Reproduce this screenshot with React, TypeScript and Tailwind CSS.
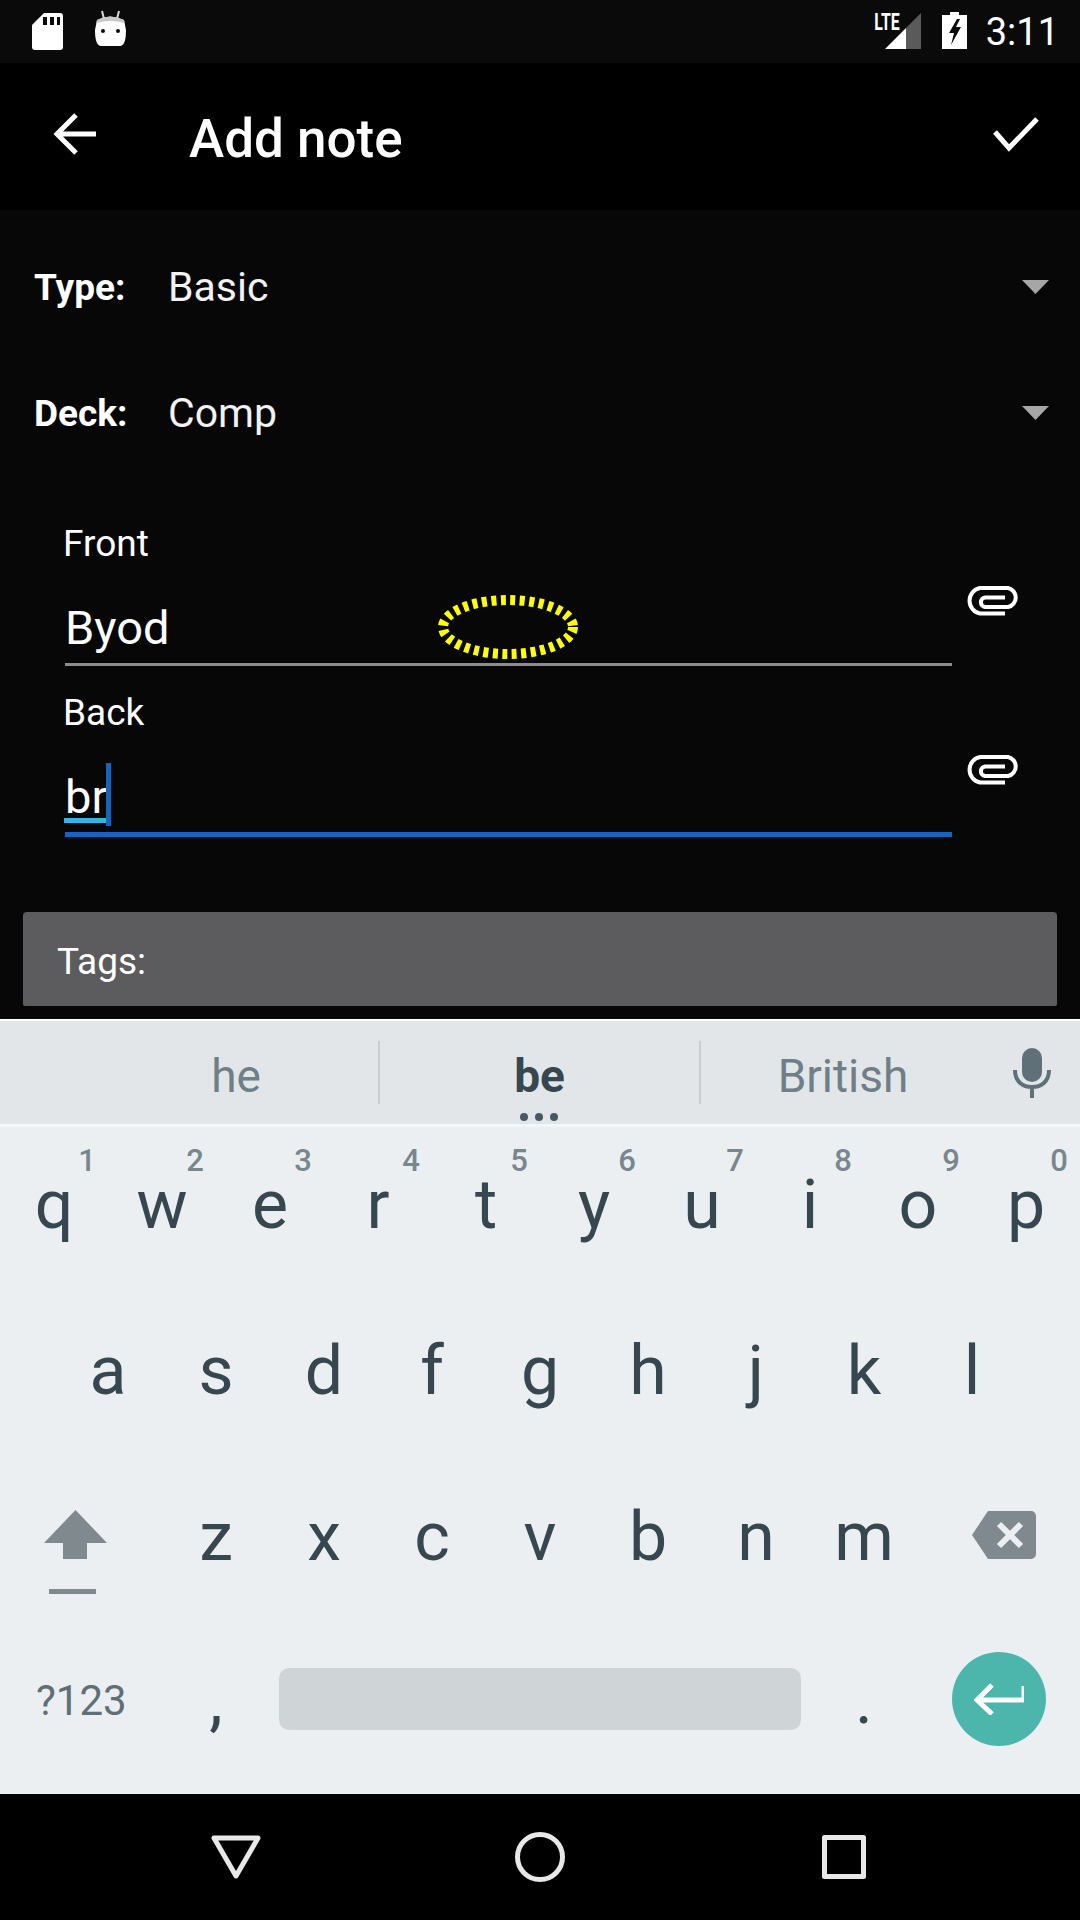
const font = { fontFamily: "Roboto, sans-serif" };

function Clip() {
  return (
    <svg width="54" height="30" viewBox="0 0 54 30" fill="none" stroke="#ffffff" strokeWidth="4">
      <path d="M40 27.5H15A13 13 0 0 1 15 2H43A9.7 9.7 0 0 1 43 21H20A4.8 4.8 0 0 1 20 11.5H40" />
    </svg>
  );
}

function Field({ label, value, focused }: { label: string; value: string; focused?: boolean }) {
  return (
    <div className="flex h-[169px] pl-[65px]">
      <div className="w-[887px] flex flex-col">
        <div className="-ml-[2px] h-[52px] pt-[3px] text-[37px] leading-[46px] text-white">{label}</div>
        <div className="relative h-[93px] text-[47px] leading-[64px] pt-[26px] text-white">
          {value}
          {focused && (
            <>
              <div className="absolute left-[-1px] top-[79px] w-[43px] h-[5px] bg-[#33b5e5]" />
              <div className="absolute left-[41px] top-[24px] w-[5px] h-[63px] bg-[#1565c0]" />
            </>
          )}
        </div>
        <div className={focused ? "h-[5px] bg-[#1565c0]" : "h-[3px] bg-[#8c8c8c]"} />
      </div>
      <div className="ml-[13px] pt-[68px]">
        <Clip />
      </div>
    </div>
  );
}

function Picker({ label, value }: { label: string; value: string }) {
  return (
    <div className="flex items-center h-[126px] pl-[34px] pr-[31px]">
      <div className="w-[134px] pt-[2px] text-[37px] font-bold text-white">{label}</div>
      <div className="flex-1 pt-[2px] text-[41px] text-[#f2f2f2]">{value}</div>
      <svg width="27" height="14" viewBox="0 0 27 14">
        <path d="M0 0H27L13.5 14Z" fill="#a6a6a6" />
      </svg>
    </div>
  );
}

function Key({ ch, hint }: { ch: string; hint?: string }) {
  return (
    <div className="relative w-[108px] h-full text-center text-[68px] leading-[68px] pt-[44px] text-[#37474f]">
      {ch}
      {hint && (
        <span className="absolute left-[75px] top-[16px] w-[24px] text-[31px] leading-[36px] font-medium text-[#78878e]">{hint}</span>
      )}
    </div>
  );
}

export default function App() {
  const row1 = "qwertyuiop".split("");
  return (
    <div className="w-[1080px] h-[1920px] flex flex-col bg-black overflow-hidden" style={font}>
      {/* status bar */}
      <div className="h-[63px] shrink-0 bg-[#0a0a0a] flex items-start relative">
        <svg className="ml-[32px] mt-[13px]" width="31" height="37" viewBox="0 0 31 37">
          <path d="M12 0H28A3 3 0 0 1 31 3V34A3 3 0 0 1 28 37H3A3 3 0 0 1 0 34V12Z" fill="#ffffff" />
          <path d="M11 4H15V12H11ZM18 4H22V12H18ZM25 4H28V12H25Z" fill="#0a0a0a" />
        </svg>
        <svg className="ml-[32px] mt-[10px]" width="31" height="37" viewBox="0 0 31 37">
          <path d="M7 1L9 9M24 1L22 9" stroke="#d8d8d8" strokeWidth="2" />
          <path d="M2 10Q15 3 29 10L31 20Q31 37 24 36H7Q0 37 0 20Z" fill="#ffffff" />
          <path d="M2 10Q15 3 29 10L29.5 13Q15 9 1.5 13Z" fill="#c8c8c8" />
          <circle cx="8" cy="21" r="2" fill="#0a0a0a" />
          <circle cx="23" cy="21" r="2" fill="#0a0a0a" />
        </svg>
        <div className="flex-1" />
        <div className="relative w-[46px] h-[36px] mt-[13px]">
          <svg className="absolute left-0 top-0" width="46" height="36" viewBox="0 0 46 36">
            <path d="M10 36L31 15V36Z" fill="#ffffff" />
            <path d="M31 15L46 0V36H31Z" fill="#5a5a5a" />
          </svg>
          <span className="absolute left-[-8px] top-[-1px] w-[40px] text-center text-[24px] leading-[20px] font-bold text-white scale-x-[0.66]">LTE</span>
        </div>
        <svg className="ml-[21px] mt-[12px]" width="25" height="37" viewBox="0 0 25 37">
          <path d="M8 0H17V3H25V37H0V3H8Z" fill="#ffffff" />
          <path d="M15 7L7 21H12L9 33L19 15H14L18 7Z" fill="#0a0a0a" />
        </svg>
        <div className="ml-[19px] mr-[21px] mt-[9px] text-[38px] leading-[46px] text-white">3:11</div>
      </div>

      {/* toolbar */}
      <div className="h-[147px] shrink-0 bg-black flex items-center">
        <svg className="ml-[53px] -mt-[6px]" width="43" height="42" viewBox="0 0 43 42" fill="none" stroke="#ffffff" strokeWidth="5">
          <path d="M43 21H4M23 2L4 21L23 40" />
        </svg>
        <div className="ml-[93px] text-[53px] leading-[56px] font-medium text-white mt-[4px]">Add note</div>
        <div className="flex-1" />
        <svg className="mr-[41px] -mt-[6px]" width="46" height="36" viewBox="0 0 46 36" fill="none" stroke="#ffffff" strokeWidth="5">
          <path d="M2 16L16 32L44 3" />
        </svg>
      </div>

      {/* form */}
      <div className="h-[809px] shrink-0 bg-[#070707] flex flex-col relative">
        <div className="pt-[14px]">
          <Picker label="Type:" value="Basic" />
          <Picker label="Deck:" value="Comp" />
        </div>
        <div className="pt-[42px]">
          <Field label="Front" value="Byod" />
          <Field label="Back" value="br" focused />
        </div>
        <svg className="absolute left-[438px] top-[385px]" width="140" height="64" viewBox="0 0 140 64" fill="none">
          <ellipse cx="70" cy="32" rx="65" ry="27" stroke="#ffff00" strokeWidth="10" strokeDasharray="5 4.5" />
        </svg>
        <div className="mt-auto mb-[13px] mx-[23px] h-[94px] bg-[#5c5c5e] rounded-t-[4px] rounded-b-[2px] pl-[34px] pt-[28px] text-[37px] leading-[44px] text-white">
          Tags:
        </div>
      </div>

      {/* keyboard */}
      <div className="h-[2px] shrink-0 bg-white" />
      <div className="h-[103px] shrink-0 bg-[#e2e6e9] flex items-center relative text-[46px] text-[#6f7f87]">
        <div className="w-[378px] pl-[94px] pt-[7px] text-center">he</div>
        <div className="w-[2px] h-[63px] bg-[#c9ced1]" />
        <div className="w-[319px] pt-[7px] text-center font-bold text-[#37474f]">be</div>
        <div className="w-[2px] h-[63px] bg-[#c9ced1]" />
        <div className="w-[284px] pt-[7px] text-center">British</div>
        <svg className="ml-[28px]" width="38" height="50" viewBox="0 0 38 50" fill="none">
          <rect x="9" y="0" width="20" height="34" rx="10" fill="#607078" />
          <path d="M2 22C2 34 10 39 19 39C28 39 36 34 36 22M19 38V50" stroke="#607078" strokeWidth="4" />
        </svg>
        <div className="absolute left-[520px] top-[92px] flex gap-[7px]">
          <div className="w-[8px] h-[8px] rounded-full bg-[#455a64]" />
          <div className="w-[8px] h-[8px] rounded-full bg-[#455a64]" />
          <div className="w-[8px] h-[8px] rounded-full bg-[#455a64]" />
        </div>
      </div>
      <div className="h-[3px] shrink-0 bg-[#f3f5f6]" />
      <div className="h-[667px] shrink-0 bg-[#ebeff2] flex flex-col">
        <div className="h-[166px] flex">
          {row1.map((c, i) => (
            <Key key={c} ch={c} hint={String((i + 1) % 10)} />
          ))}
        </div>
        <div className="h-[166px] flex pl-[54px]">
          {"asdfghjkl".split("").map((c) => (
            <Key key={c} ch={c} />
          ))}
        </div>
        <div className="h-[166px] flex">
          <div className="w-[162px] pl-[44px] pt-[51px]">
            <svg width="63" height="84" viewBox="0 0 63 84">
              <path d="M31.5 0L63 33H43V49H19V33H0Z" fill="#80898d" />
              <rect x="5" y="79" width="47" height="5" fill="#80898d" />
            </svg>
          </div>
          {"zxcvbnm".split("").map((c) => (
            <Key key={c} ch={c} />
          ))}
          <div className="w-[162px] pl-[54px] pt-[52px]">
            <svg width="64" height="48" viewBox="0 0 64 48">
              <path d="M16 0H59A5 5 0 0 1 64 5V43A5 5 0 0 1 59 48H16L0 24Z" fill="#80898d" />
              <path d="M27 13L49 35M49 13L27 35" stroke="#ebeff2" strokeWidth="6" />
            </svg>
          </div>
        </div>
        <div className="h-[169px] flex">
          <div className="w-[162px] pl-[36px] pt-[51px] text-[42px] leading-[50px] text-[#5f6f76]">?123</div>
          <div className="w-[108px] text-center text-[68px] leading-[68px] pt-[41px] text-[#37474f]">,</div>
          <div className="w-[522px] h-[62px] mt-[43px] mx-[9px] rounded-[10px] bg-[#cfd4d7]" />
          <div className="w-[108px] text-center text-[68px] leading-[68px] pt-[41px] text-[#37474f]">.</div>
          <div className="w-[162px] pl-[34px] pt-[27px]">
            <div className="w-[94px] h-[94px] rounded-full bg-[#4db6ac] flex items-center justify-center">
              <svg width="50" height="32" viewBox="0 0 50 32" fill="none" stroke="#ffffff" strokeWidth="5">
                <path d="M50 3V17H4M18 2L3 17L18 31" />
              </svg>
            </div>
          </div>
        </div>
      </div>

      {/* navigation */}
      <div className="flex-1 bg-black flex justify-center items-center">
        <div className="w-[304px] flex justify-center">
          <svg width="50" height="44" viewBox="0 0 50 44" fill="none" stroke="#e8e8e8" strokeWidth="5" strokeLinejoin="round">
            <path d="M3 3H47L25 41Z" />
          </svg>
        </div>
        <div className="w-[304px] flex justify-center">
          <svg width="50" height="50" viewBox="0 0 50 50" fill="none" stroke="#e8e8e8" strokeWidth="5">
            <circle cx="25" cy="25" r="22.5" />
          </svg>
        </div>
        <div className="w-[304px] flex justify-center">
          <svg width="44" height="44" viewBox="0 0 44 44" fill="none" stroke="#e8e8e8" strokeWidth="5" strokeLinejoin="round">
            <rect x="2.5" y="2.5" width="39" height="39" />
          </svg>
        </div>
      </div>
    </div>
  );
}
